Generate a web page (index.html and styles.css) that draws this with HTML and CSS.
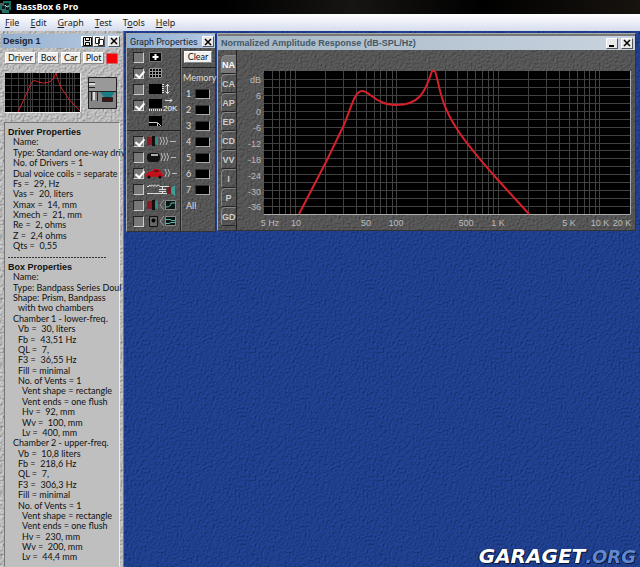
FILE: index.html
```html
<!DOCTYPE html>
<html lang="en">
<head>
<meta charset="utf-8">
<title>BassBox 6 Pro</title>
<link rel="stylesheet" href="styles.css">
</head>
<body>
<header class="titlebar">
  <svg class="app-icon" width="12" height="12" viewBox="0 0 12 12" aria-hidden="true"><path fill="#1c6f66" d="M0 2h3V0h8v9H9v3H2V9H0z"/><path fill="#071c1c" d="M4 2h5v2H4zM2 5h3v3H2zM6 5h3v4H6z"/><path stroke="#a34c4c" d="M0 3h3M1 9h3"/><path stroke="#c2d5d0" d="M5 4l2 2 2-1"/></svg>
  <h1>BassBox 6 Pro</h1>
</header>
<nav class="menubar">
  <a href="#"><u>F</u>ile</a><a href="#"><u>E</u>dit</a><a href="#"><u>G</u>raph</a><a href="#"><u>T</u>est</a><a href="#">T<u>o</u>ols</a><a href="#"><u>H</u>elp</a>
</nav>
<div class="app">
  <aside class="design">
    <div class="bar design-bar">
      <h2>Design 1</h2>
      <button class="cap" aria-label="Save"><svg width="9" height="9" viewBox="0 0 9 9"><path fill="none" stroke="#000" d="M.5.5h8v8h-8zM2.500.5v3h4v-3M2.500 8.500v-3h4v3"/></svg></button>
      <button class="cap" aria-label="Copy"><svg width="9" height="9" viewBox="0 0 9 9"><path fill="#fff" stroke="#222" d="M.5.5h4v6h-4zM3.500 2.500h5v6h-5z"/></svg></button>
      <button class="cap close" aria-label="Close design"><svg width="8" height="8" viewBox="0 0 8 8"><path stroke="#000" stroke-width="1.500" d="M1 1l6 6M7 1L1 7"/></svg></button>
    </div>
    <div class="actions">
      <button>Driver</button><button>Box</button><button>Car</button><button class="plot-btn">Plot</button><span class="swatch"></span>
    </div>
    <div class="preview">
      <svg class="thumb" width="76" height="40" viewBox="0 0 76 40" aria-hidden="true">
        <path fill="#000" d="M0 0h76v40H0z"/>
        <path stroke="#3c3c3c" d="M0 5.500h76M0 12.500h76M0 19.500h76M0 26.500h76M0 33.500h76M6.500 0v40M13.500 0v40M19.500 0v40M22.500 0v40M25.500 0v40M27.500 0v40M34.500 0v40M40.500 0v40M43.500 0v40M46.500 0v40M48.500 0v40M55.500 0v40M61.500 0v40M64.500 0v40M67.500 0v40M69.500 0v40"/>
        <path fill="none" stroke="#d1272d" d="M13 39L26 11Q28 6 31 8Q39 12 46 8Q49 6 51 0Q53 9 57 16Q63 27 75 38"/>
        <path fill="none" stroke="#eee" d="M0 39.500h75.500V0"/>
      </svg>
      <svg width="29" height="32" viewBox="0 0 29 32" aria-hidden="true">
        <path fill="#858585" stroke="#222" d="M.5.5h28v31H.5z"/>
        <path fill="#999" d="M1 1h27v13H1z"/>
        <path stroke="#222" d="M1 14.500h27M1 5.500h6M1 10.500h6M3.500 15v9M9.500 15v9"/>
        <path stroke="#ddd" stroke-width="2" d="M1 7h6M6 15v8"/>
        <path fill="#177d87" d="M12 15h15l-4 5h-7z"/><path fill="#451318" stroke="#222" d="M14.500 20.500h10v4h-10z"/>
      </svg>
    </div>
    <section class="props">
      <h3>Driver Properties</h3>
      <p>Name:</p>
      <p>Type: Standard one-way driv</p>
      <p>No. of Drivers = 1</p>
      <p>Dual voice coils = separate</p>
      <p>Fs =&nbsp; 29, Hz</p>
      <p>Vas =&nbsp; 20, liters</p>
      <p>Xmax =&nbsp; 14, mm</p>
      <p>Xmech =&nbsp; 21, mm</p>
      <p>Re =&nbsp; 2, ohms</p>
      <p>Z =&nbsp; 2,4 ohms</p>
      <p>Qts =&nbsp; 0,55</p>
      <div class="rule"></div>
      <h3>Box Properties</h3>
      <p>Name:</p>
      <p>Type: Bandpass Series Doul</p>
      <p>Shape: Prism, Bandpass</p>
      <p class="in1">with two chambers</p>
      <p>Chamber 1 - lower-freq.</p>
      <p class="in1">Vb =&nbsp; 30, liters</p>
      <p class="in1">Fb =&nbsp; 43,51 Hz</p>
      <p class="in1">QL =&nbsp; 7,</p>
      <p class="in1">F3 =&nbsp; 36,55 Hz</p>
      <p class="in1">Fill = minimal</p>
      <p class="in1">No. of Vents = 1</p>
      <p class="in2">Vent shape = rectangle</p>
      <p class="in2">Vent ends = one flush</p>
      <p class="in2">Hv =&nbsp; 92, mm</p>
      <p class="in2">Wv =&nbsp; 100, mm</p>
      <p class="in2">Lv =&nbsp; 400, mm</p>
      <p>Chamber 2 - upper-freq.</p>
      <p class="in1">Vb =&nbsp; 10,8 liters</p>
      <p class="in1">Fb =&nbsp; 218,6 Hz</p>
      <p class="in1">QL =&nbsp; 7,</p>
      <p class="in1">F3 =&nbsp; 306,3 Hz</p>
      <p class="in1">Fill = minimal</p>
      <p class="in1">No. of Vents = 1</p>
      <p class="in2">Vent shape = rectangle</p>
      <p class="in2">Vent ends = one flush</p>
      <p class="in2">Hv =&nbsp; 230, mm</p>
      <p class="in2">Wv =&nbsp; 200, mm</p>
      <p class="in2">Lv =&nbsp; 44,4 mm</p>
    </section>
  </aside>
  <main class="workspace">
    <section class="window tools">
      <div class="bar tools-bar">
        <h2>Graph Properties</h2>
        <button class="cap close" aria-label="Close graph properties"><svg width="8" height="8" viewBox="0 0 8 8"><path stroke="#000" stroke-width="1.500" d="M1 1l6 6M7 1L1 7"/></svg></button>
      </div>
      <div class="tools-body">
        <div class="options">
          <div class="group">
            <label><input type="checkbox" aria-label="Cursor"><svg width="32" height="14" viewBox="0 0 32 14"><path fill="#000" stroke="#777" d="M1.500 2.500h12v9h-12z"/><path stroke="#fff" stroke-width="2" d="M4.500 7h6M7.500 4v6"/></svg></label>
            <label><input type="checkbox" aria-label="Grid" checked><svg width="32" height="14" viewBox="0 0 32 14"><path fill="#000" d="M1 2h13v10H1z"/><path fill="none" stroke="#999" d="M1.500 2.500h12v9h-12zM4.500 2v10M7.500 2v10M10.500 2v10M1 5.500h13M1 8.500h13"/></svg></label>
            <label><input type="checkbox" aria-label="Vertical scale"><svg width="32" height="14" viewBox="0 0 32 14"><path fill="#000" d="M1 2h13v10H1z"/><path stroke="#ddd" stroke-dasharray="1 1" stroke-width="2" d="M15 2v10"/><path fill="none" stroke="#ddd" d="M19.500 2v10M17.500 4.500l2-2 2 2M17.500 9.500l2 2 2-2"/></svg></label>
            <label><input type="checkbox" aria-label="20K" checked><svg width="32" height="14" viewBox="0 0 32 14"><path fill="#000" d="M1 1h13v9H1z"/><path stroke="#ddd" stroke-dasharray="1 1" stroke-width="2" d="M1 12h13"/><path fill="none" stroke="#ddd" d="M17 2.500h7M22 .5l2 2-2 2"/><text x="15" y="13" class="mini">20K</text></svg></label>
            <label class="bare"><svg width="32" height="14" viewBox="0 0 32 14"><path fill="#000" d="M1 2h13v10H1z"/><path fill="none" stroke="#ccc" d="M1 8.500h8.500V12M10 9l3 3"/></svg></label>
          </div>
          <div class="group">
            <label><input type="checkbox" aria-label="Driver response" checked><svg width="32" height="14" viewBox="0 0 32 14"><path fill="#8a1b20" d="M-1 3h5v8h-5z"/><path fill="#111" d="M4 2h3v10H4z"/><path fill="#388783" d="M7 4l3-2v10l-3-2z"/><path fill="none" stroke="#bbb" d="M12 3q3 4 0 8M15 3q3 4 0 8M18 3q3 4 0 8M22 7.500h6"/></svg></label>
            <label><input type="checkbox" aria-label="Box response"><svg width="32" height="14" viewBox="0 0 32 14"><rect x="-1" y="3" width="13" height="9" rx="4" fill="#111"/><path stroke="#aaa" stroke-width="2" d="M3 5h7"/><path fill="none" stroke="#bbb" d="M13 3q3 4 0 8M16 3q3 4 0 8M19 3q3 4 0 8M23 7.500h5"/></svg></label>
            <label><input type="checkbox" aria-label="Car response" checked><svg width="32" height="14" viewBox="0 0 32 14"><path fill="#c1121c" d="M-3 9l3-3 4-1 2-2h5l2 3 2 2v3H-3z"/><path fill="#6d0b10" d="M5 6l2-2h3l1 2z"/><circle cx="1" cy="11" r="1.500"/><circle cx="12" cy="11" r="1.500"/><path fill="none" stroke="#bbb" d="M17 3q3 4 0 8M20 3q3 4 0 8M24 7.500h5"/></svg></label>
            <label><input type="checkbox" aria-label="Filter"><svg width="32" height="14" viewBox="0 0 32 14"><path fill="none" stroke="#ddd" d="M-1 4.500h2q0-3 2 0q0-3 3 0q0-3 3 0q0-3 3 0h9M-1 11.500h21M14.500 5v2M11 7.500h7M11 9.500h7M14.500 9v2"/><path fill="#761b20" d="M19 5h4v7h-4z"/><path fill="#3b9c94" d="M23 6l4-3v11l-4-3z"/></svg></label>
            <label><input type="checkbox" aria-label="Driver curve"><svg width="32" height="14" viewBox="0 0 32 14"><path fill="#8a1b20" d="M-1 3h5v8h-5z"/><path fill="#111" d="M4 2h3v10H4z"/><path fill="#388783" d="M7 4l3-2v10l-3-2z"/><path fill="none" stroke="#999" d="M16 2l-4 5 4 5"/><path fill="#071515" stroke="#888" d="M17.500 2.500h10v9h-10z"/><path fill="none" stroke="#69b5ab" d="M18 9q5 0 5-4h4"/></svg></label>
            <label><input type="checkbox" aria-label="Box curve"><svg width="32" height="14" viewBox="0 0 32 14"><path fill="#666" stroke="#111" d="M1.500 2.500h8v10h-8z"/><circle cx="5.500" cy="6.500" r="2"/><path fill="none" stroke="#999" d="M16 2l-4 5 4 5"/><path fill="#071515" stroke="#888" d="M17.500 2.500h10v9h-10z"/><path fill="none" stroke="#69b5ab" d="M18 5.500h4l2 1h3M18 9.500h3l2-1h4"/></svg></label>
          </div>
        </div>
        <div class="memory">
          <button class="clear">Clear</button>
          <h3>Memory</h3>
          <div class="slot">1<button aria-label="Memory 1"></button></div>
          <div class="slot">2<button aria-label="Memory 2"></button></div>
          <div class="slot">3<button aria-label="Memory 3"></button></div>
          <div class="slot">4<button aria-label="Memory 4"></button></div>
          <div class="slot">5<button aria-label="Memory 5"></button></div>
          <div class="slot">6<button aria-label="Memory 6"></button></div>
          <div class="slot">7<button aria-label="Memory 7"></button></div>
          <div class="slot">All</div>
        </div>
      </div>
    </section>
    <section class="window response">
      <div class="bar response-bar">
        <h2>Normalized Amplitude Response (dB-SPL/Hz)</h2>
        <button class="cap" aria-label="Minimize"><svg width="8" height="8" viewBox="0 0 8 8"><path fill="#000" d="M1 6h5v2H1z"/></svg></button>
        <button class="cap close" aria-label="Close graph"><svg width="8" height="8" viewBox="0 0 8 8"><path stroke="#000" stroke-width="1.500" d="M1 1l6 6M7 1L1 7"/></svg></button>
      </div>
      <div class="response-body">
        <div class="tabs">
          <button class="active">NA</button><button>CA</button><button>AP</button><button>EP</button><button>CD</button><button>VV</button><button>I</button><button>P</button><button>GD</button>
        </div>
        <svg class="chart" viewBox="0 0 397 180" role="img" aria-label="Normalized amplitude response">
          <g transform="translate(27 21)">
            <path fill="#000" d="M0 0h366v143H0z"/>
            <path stroke="#424242" d="M0 8.500h366M0 16.500h366M0 24.500h366M0 32.500h366M0 40.500h366M0 48.500h366M0 56.500h366M0 64.500h366M0 72.500h366M0 79.500h366M0 87.500h366M0 95.500h366M0 103.500h366M0 111.500h366M0 119.500h366M0 127.500h366M0 135.500h366"/>
            <path stroke="#424242" d="M8.500 0v143M15.500 0v143M21.500 0v143M26.500 0v143M31.500 0v143M61.500 0v143M79.500 0v143M92.500 0v143M102.500 0v143M110.500 0v143M116.500 0v143M122.500 0v143M128.500 0v143M132.500 0v143M163.500 0v143M181.500 0v143M193.500 0v143M203.500 0v143M211.500 0v143M218.500 0v143M224.500 0v143M229.500 0v143M234.500 0v143M264.500 0v143M282.500 0v143M295.500 0v143M305.500 0v143M313.500 0v143M320.500 0v143M325.500 0v143M331.500 0v143M335.500 0v143"/>
            <path fill="none" stroke="#aaa" d="M0 143.500h366.500V0"/>
            <path class="curve" d="M35 143L62 91L79 56C86 41 90 20 98 20C106 20 112 34 132 34C155 34 161 22 168 0H171C176 16 176 32 193 58C203 74 218 91 234 109L265 143"/>
          </g>
          <g class="axis end">
            <text x="24" y="33">dB</text><text x="24" y="49">6</text><text x="24" y="65">0</text><text x="24" y="81">-6</text><text x="24" y="97">-12</text><text x="24" y="113">-18</text><text x="24" y="129">-24</text><text x="24" y="145">-30</text><text x="24" y="160">-36</text>
          </g>
          <g class="axis mid">
            <text x="33" y="176">5 Hz</text><text x="59" y="176">10</text><text x="129" y="176">50</text><text x="159" y="176">100</text><text x="229" y="176">500</text><text x="261" y="176">1 K</text><text x="332" y="176">5 K</text><text x="363" y="176">10 K</text><text x="385" y="176">20 K</text>
          </g>
        </svg>
      </div>
    </section>
    <div class="watermark">GARAGET<span>.ORG</span></div>
  </main>
</div>
</body>
</html>
```
FILE: styles.css
```css
* { box-sizing: border-box; }
body {
  margin: 0;
  min-height: 100vh;
  display: flex;
  flex-direction: column;
  font: 9px/12px "Liberation Sans", Arial, sans-serif;
  color: #111;
}
h1, h2, h3, p { margin: 0; font-size: inherit; }
button { font: inherit; color: #111; padding: 0; border: 0; }
svg { display: block; flex: none; }

.titlebar {
  height: 14px;
  display: flex;
  align-items: center;
  gap: 4px;
  background: linear-gradient(90deg, #000 35%, #171513 55%, #000 75%, #17130f);
  color: #fff;
}
.titlebar h1 { font: bold 9px/14px "Open Sans", sans-serif; }
.menubar {
  height: 17px;
  display: flex;
  gap: 11px;
  padding-left: 5px;
  background: linear-gradient(#fff, #e6eaf6 60%, #d5dcec);
  font: 9px/17px "Noto Sans", sans-serif;
}
.menubar a { color: #222; text-decoration: none; }

.app { flex: 1; display: flex; }
.bar { display: flex; align-items: center; }
.bar h2 { flex: 1; white-space: nowrap; }
.cap {
  width: 12px;
  height: 11px;
  display: grid;
  place-items: center;
  background: #e8e8e8;
  border: 1px solid;
  border-color: #fff #555 #555 #fff;
}

.design {
  width: 124px;
  flex: none;
  display: flex;
  flex-direction: column;
  padding: 3px 3px 0 1px;
  border-right: 1px solid #777;
  background: #bdbdbd url("data:image/svg+xml,%3Csvg xmlns='http://www.w3.org/2000/svg' width='128' height='128'%3E%3Cfilter id='f' x='0' y='0' width='1' height='1' color-interpolation-filters='sRGB'%3E%3CfeTurbulence type='fractalNoise' baseFrequency='.5' numOctaves='2' stitchTiles='stitch'/%3E%3CfeDiffuseLighting surfaceScale='1' lighting-color='%23d8d8d8'%3E%3CfeDistantLight azimuth='225' elevation='60'/%3E%3C/feDiffuseLighting%3E%3C/filter%3E%3Crect width='128' height='128' filter='url(%23f)'/%3E%3C/svg%3E");
}
.design-bar {
  height: 14px;
  padding-left: 2px;
  background: linear-gradient(90deg, #96b1cf, #b7cae0);
}
.design-bar .close { margin-left: 3px; }
.actions {
  height: 20px;
  display: flex;
  align-items: center;
  padding-left: 4px;
  gap: 2px;
}
.actions button, .clear {
  height: 12px;
  padding: 0 2px;
  background: #f0f0f0;
  border: 1px solid;
  border-color: #fff #888 #888 #fff;
  line-height: 10px;
}
.actions button { font-family: Lato, sans-serif; }
.actions .plot-btn { margin-left: auto; }
.swatch { width: 12px; height: 11px; background: #f80008; border: 1px solid #c66; margin-right: 2px; }
.preview { display: flex; gap: 7px; padding: 5px 0 9px 4px; align-items: center; }
.props {
  flex: 1;
  display: flex;
  flex-direction: column;
  margin-left: 3px;
  padding: 4px 0 3px 3px;
  background: #bfbfbf;
  border: 1px solid;
  border-color: #777 #eee #bfbfbf #777;
  font-family: Lato, sans-serif;
}
.props > * { flex: 1 1 0; line-height: 10px; white-space: nowrap; }
.props h3 { font-family: "Liberation Sans", sans-serif; }
.props p { padding-left: 5px; }
.props .in1 { padding-left: 10px; }
.props .in2 { padding-left: 14px; }
.rule { width: 98px; background: repeating-linear-gradient(90deg, #333 0 2px, transparent 2px 3px) 0 5px / 100% 1px no-repeat; }

.workspace {
  flex: 1;
  min-width: 0;
  position: relative;
  display: flex;
  align-items: flex-start;
  gap: 1px;
  padding: 2px 4px 0 2px;
  background: #1f3f92 url("data:image/svg+xml,%3Csvg xmlns='http://www.w3.org/2000/svg' width='128' height='128'%3E%3Cfilter id='f' x='0' y='0' width='1' height='1' color-interpolation-filters='sRGB'%3E%3CfeTurbulence type='fractalNoise' baseFrequency='.5' numOctaves='2' stitchTiles='stitch'/%3E%3CfeDiffuseLighting surfaceScale='1' lighting-color='%232449a3'%3E%3CfeDistantLight azimuth='225' elevation='60'/%3E%3C/feDiffuseLighting%3E%3C/filter%3E%3Crect width='128' height='128' filter='url(%23f)'/%3E%3C/svg%3E");
}
.window {
  border: 1px solid;
  border-color: #aaa #333 #333 #aaa;
  background: #565656 url("data:image/svg+xml,%3Csvg xmlns='http://www.w3.org/2000/svg' width='128' height='128'%3E%3Cfilter id='f' x='0' y='0' width='1' height='1' color-interpolation-filters='sRGB'%3E%3CfeTurbulence type='fractalNoise' baseFrequency='.5' numOctaves='2' stitchTiles='stitch'/%3E%3CfeDiffuseLighting surfaceScale='1' lighting-color='%23636363'%3E%3CfeDistantLight azimuth='225' elevation='60'/%3E%3C/feDiffuseLighting%3E%3C/filter%3E%3Crect width='128' height='128' filter='url(%23f)'/%3E%3C/svg%3E");
  color: #ddd;
}
.tools { width: 90px; flex: none; }
.bar h2 { color: #172436; }
.tools-bar {
  height: 14px;
  padding: 1px 1px 0 3px;
  background: linear-gradient(90deg, #8faed2, #b5c9e2);
}
.tools-bar h2 { font-weight: normal; font-family: Roboto, sans-serif; }
.tools-body { display: flex; }
.options { width: 55px; border-right: 1px solid #222; }
.group { padding: 1px 0 0 6px; }
.group + .group { margin-top: 1px; padding: 2px 0 2px 6px; border-top: 1px solid #222; }
.group label { height: 16px; display: flex; align-items: center; gap: 4px; }
.group .bare { padding-left: 15px; }
.group svg { overflow: visible; }
.group input {
  appearance: none;
  position: relative;
  width: 11px;
  height: 11px;
  margin: 0;
  background: #777;
  border: 1px solid;
  border-color: #222 #ccc #ccc #222;
}
.group input:checked::after {
  content: "";
  position: absolute;
  left: 3px;
  top: 0;
  width: 4px;
  height: 7px;
  border: solid #fff;
  border-width: 0 2px 2px 0;
  transform: rotate(40deg);
}
.mini { font-size: 8px; fill: #fff; }
.memory { flex: 1; border-left: 1px solid #777; font-family: Lato, sans-serif; }
.clear { display: block; width: 28px; margin: 3px 0 0 2px; }
.memory h3 { margin-top: 4px; padding: 4px 0 2px 1px; border-top: 1px solid #222; font-weight: normal; line-height: 12px; }
.slot { height: 16px; display: flex; align-items: center; gap: 4px; padding-left: 4px; }
.slot button { width: 15px; height: 10px; background: #000; border: 1px solid; border-color: #333 #aaa #aaa #333; }

.response { flex: 1; min-width: 0; }
.response-bar {
  height: 16px;
  padding: 0 2px 0 3px;
  background: linear-gradient(90deg, #a5b6c4, #c8d3df);
  border-top: 2px solid #777;
}
.response-bar h2 { color: #435866; }
.response-bar .close { margin-left: 3px; }
.response-body { display: flex; padding-right: 1px; }
.tabs { display: flex; flex-direction: column; width: 19px; flex: none; padding: 5px 0 0 3px; border-right: 1px solid #222; }
.tabs button {
  height: 19px;
  background: none;
  border: 1px solid;
  border-color: #888 transparent #222 #888;
  border-radius: 5px 0 0 3px;
  color: #ccc;
  font: bold 9px/16px "Liberation Sans", sans-serif;
}
.tabs .active { background: #777; color: #fff; }
.chart { flex: 1; min-width: 0; }
.curve { fill: none; stroke: #d8202a; stroke-width: 2; stroke-linejoin: round; }
.axis { font-size: 9px; fill: #bbb; }
.end { text-anchor: end; }
.mid { text-anchor: middle; }

.watermark {
  position: absolute;
  right: 4px;
  bottom: 0;
  font: italic bold 20px/20px "DejaVu Sans", sans-serif;
  color: #fff;
  text-shadow: 1px 1px 0 #081334, -1px 0 0 #081334;
}
.watermark span { color: #6088d0; font-size: 18px; }
```
